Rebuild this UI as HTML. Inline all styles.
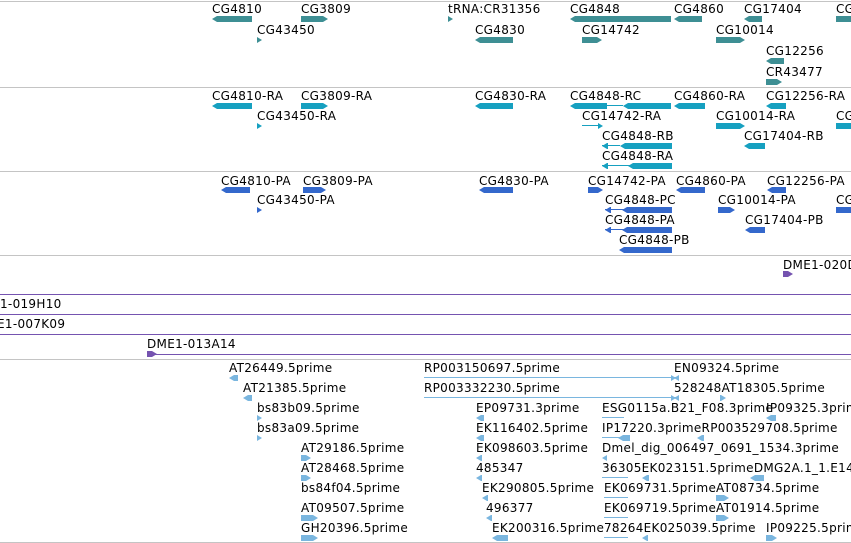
<!DOCTYPE html>
<html><head><meta charset="utf-8"><style>
body{margin:0;width:851px;height:543px;overflow:hidden;background:#fff;position:relative;font-family:"DejaVu Sans","Liberation Sans",sans-serif}
.t{position:absolute;font-size:12px;line-height:12px;letter-spacing:0.3px;color:#000;white-space:nowrap;margin-top:1px}
.b{position:absolute;height:6px}
.L{clip-path:polygon(0 50%,5px 0,100% 0,100% 100%,5px 100%)}
.R{clip-path:polygon(0 0,calc(100% - 5px) 0,100% 50%,calc(100% - 5px) 100%,0 100%)}
.g{background:#3e8f94}.c{background:#16a0c0}.p{background:#3468cc}.e{background:#7ab6df}.v{background:#7553b0}
.h{position:absolute;left:0;width:851px;height:1px;background:#c4c4c4}
.pl{position:absolute;height:1px;background:#7553b0}
.ln{position:absolute;height:1px}
</style></head><body>
<div class="h" style="top:1px"></div>
<div class="h" style="top:87px"></div>
<div class="h" style="top:171px"></div>
<div class="h" style="top:255px"></div>
<div class="h" style="top:359px"></div>
<div class="h" style="top:542px"></div>

<div class="t" style="left:212px;top:2px">CG4810</div><div class="b g L" style="left:212px;top:16px;width:40px"></div>
<div class="t" style="left:301px;top:2px">CG3809</div><div class="b g R" style="left:301px;top:16px;width:27px"></div>
<div class="t" style="left:257px;top:23px">CG43450</div><div class="b g R" style="left:257px;top:37px;width:5px"></div>
<div class="t" style="left:448px;top:2px">tRNA:CR31356</div><div class="b g R" style="left:448px;top:16px;width:5px"></div>
<div class="t" style="left:475px;top:23px">CG4830</div><div class="b g L" style="left:475px;top:37px;width:38px"></div>
<div class="t" style="left:570px;top:2px">CG4848</div><div class="b g L" style="left:570px;top:16px;width:101px"></div>
<div class="t" style="left:674px;top:2px">CG4860</div><div class="b g L" style="left:674px;top:16px;width:28px"></div>
<div class="t" style="left:744px;top:2px">CG17404</div><div class="b g L" style="left:744px;top:16px;width:18px"></div>
<div class="t" style="left:836px;top:2px">CG</div><div class="b g" style="left:836px;top:16px;width:15px"></div>
<div class="t" style="left:582px;top:23px">CG14742</div><div class="b g R" style="left:582px;top:37px;width:20px"></div>
<div class="t" style="left:716px;top:23px">CG10014</div><div class="b g R" style="left:716px;top:37px;width:29px"></div>
<div class="t" style="left:766px;top:44px">CG12256</div><div class="b g L" style="left:766px;top:58px;width:18px"></div>
<div class="t" style="left:766px;top:65px">CR43477</div><div class="b g R" style="left:766px;top:79px;width:16px"></div>

<div class="t" style="left:212px;top:89px">CG4810-RA</div><div class="b c L" style="left:212px;top:103px;width:40px"></div>
<div class="t" style="left:301px;top:89px">CG3809-RA</div><div class="b c R" style="left:301px;top:103px;width:27px"></div>
<div class="t" style="left:257px;top:109px">CG43450-RA</div><div class="b c R" style="left:257px;top:123px;width:5px"></div>
<div class="t" style="left:475px;top:89px">CG4830-RA</div><div class="b c L" style="left:475px;top:103px;width:38px"></div>
<div class="t" style="left:570px;top:89px">CG4848-RC</div><div class="b c L" style="left:570px;top:103px;width:37px"></div><div class="ln c" style="left:607px;top:105px;width:16px"></div><div class="b c L" style="left:623px;top:103px;width:48px"></div>
<div class="t" style="left:674px;top:89px">CG4860-RA</div><div class="b c L" style="left:674px;top:103px;width:31px"></div>
<div class="t" style="left:766px;top:89px">CG12256-RA</div><div class="b c L" style="left:766px;top:103px;width:20px"></div>
<div class="t" style="left:582px;top:109px">CG14742-RA</div><div class="ln c" style="left:582px;top:125px;width:18px"></div><div class="b c R" style="left:598px;top:123px;width:5px"></div>
<div class="t" style="left:716px;top:109px">CG10014-RA</div><div class="b c R" style="left:716px;top:123px;width:29px"></div>
<div class="t" style="left:836px;top:109px">CG</div><div class="b c" style="left:836px;top:123px;width:15px"></div>
<div class="t" style="left:602px;top:129px">CG4848-RB</div><div class="ln c" style="left:602px;top:145px;width:18px"></div><div class="b c L" style="left:602px;top:143px;width:6px"></div><div class="b c L" style="left:620px;top:143px;width:52px"></div>
<div class="t" style="left:744px;top:129px">CG17404-RB</div><div class="b c L" style="left:744px;top:143px;width:21px"></div>
<div class="t" style="left:602px;top:149px">CG4848-RA</div><div class="ln c" style="left:602px;top:165px;width:28px"></div><div class="b c L" style="left:602px;top:163px;width:6px"></div><div class="b c L" style="left:628px;top:163px;width:44px"></div>

<div class="t" style="left:221px;top:174px">CG4810-PA</div><div class="b p L" style="left:221px;top:187px;width:29px"></div>
<div class="t" style="left:303px;top:174px">CG3809-PA</div><div class="b p R" style="left:303px;top:187px;width:23px"></div>
<div class="t" style="left:257px;top:193px">CG43450-PA</div><div class="b p R" style="left:257px;top:207px;width:5px"></div>
<div class="t" style="left:479px;top:174px">CG4830-PA</div><div class="b p L" style="left:479px;top:187px;width:34px"></div>
<div class="t" style="left:588px;top:174px">CG14742-PA</div><div class="b p R" style="left:588px;top:187px;width:15px"></div>
<div class="t" style="left:676px;top:174px">CG4860-PA</div><div class="b p L" style="left:676px;top:187px;width:29px"></div>
<div class="t" style="left:767px;top:174px">CG12256-PA</div><div class="b p L" style="left:767px;top:187px;width:19px"></div>
<div class="t" style="left:605px;top:193px">CG4848-PC</div><div class="ln p" style="left:605px;top:209px;width:20px"></div><div class="b p L" style="left:605px;top:207px;width:6px"></div><div class="b p L" style="left:622px;top:207px;width:50px"></div>
<div class="t" style="left:718px;top:193px">CG10014-PA</div><div class="b p R" style="left:718px;top:207px;width:17px"></div>
<div class="t" style="left:836px;top:193px">CG</div><div class="b p" style="left:836px;top:207px;width:15px"></div>
<div class="t" style="left:605px;top:213px">CG4848-PA</div><div class="ln p" style="left:605px;top:229px;width:20px"></div><div class="b p L" style="left:605px;top:227px;width:6px"></div><div class="b p L" style="left:622px;top:227px;width:50px"></div>
<div class="t" style="left:745px;top:213px">CG17404-PB</div><div class="b p L" style="left:745px;top:227px;width:20px"></div>
<div class="t" style="left:619px;top:233px">CG4848-PB</div><div class="b p L" style="left:619px;top:247px;width:53px"></div>

<div class="t" style="left:783px;top:258px">DME1-020D</div><div class="b v R" style="left:783px;top:271px;width:10px"></div>
<div class="pl" style="left:0;top:294px;width:851px"></div>
<div class="t" style="left:0;top:297px">1-019H10</div>
<div class="pl" style="left:0;top:314px;width:851px"></div>
<div class="t" style="left:-3px;top:317px">E1-007K09</div>
<div class="pl" style="left:0;top:334px;width:851px"></div>
<div class="t" style="left:147px;top:337px">DME1-013A14</div><div class="b v R" style="left:147px;top:351px;width:10px"></div><div class="pl" style="left:150px;top:354px;width:701px"></div>

<div class="t" style="left:229px;top:361px">AT26449.5prime</div><div class="b e L" style="left:229px;top:375px;width:9px"></div>
<div class="t" style="left:243px;top:381px">AT21385.5prime</div><div class="b e L" style="left:243px;top:395px;width:9px"></div>
<div class="t" style="left:257px;top:401px">bs83b09.5prime</div><div class="b e R" style="left:257px;top:415px;width:5px"></div>
<div class="t" style="left:257px;top:421px">bs83a09.5prime</div><div class="b e R" style="left:257px;top:435px;width:5px"></div>
<div class="t" style="left:301px;top:441px">AT29186.5prime</div><div class="b e R" style="left:301px;top:455px;width:10px"></div>
<div class="t" style="left:301px;top:461px">AT28468.5prime</div><div class="b e R" style="left:301px;top:475px;width:10px"></div>
<div class="t" style="left:301px;top:481px">bs84f04.5prime</div>
<div class="t" style="left:301px;top:501px">AT09507.5prime</div><div class="b e R" style="left:301px;top:515px;width:17px"></div>
<div class="t" style="left:301px;top:521px">GH20396.5prime</div><div class="b e R" style="left:301px;top:535px;width:17px"></div>

<div class="t" style="left:424px;top:361px">RP003150697.5prime</div><div class="ln e" style="left:424px;top:377px;width:252px"></div><div class="b e R" style="left:671px;top:375px;width:5px"></div>
<div class="t" style="left:424px;top:381px">RP003332230.5prime</div><div class="ln e" style="left:424px;top:397px;width:252px"></div><div class="b e R" style="left:671px;top:395px;width:5px"></div>
<div class="t" style="left:476px;top:401px">EP09731.3prime</div><div class="b e L" style="left:476px;top:415px;width:8px"></div>
<div class="t" style="left:476px;top:421px">EK116402.5prime</div><div class="b e L" style="left:476px;top:435px;width:8px"></div>
<div class="t" style="left:476px;top:441px">EK098603.5prime</div><div class="b e L" style="left:476px;top:455px;width:6px"></div>
<div class="t" style="left:476px;top:461px">485347</div><div class="b e L" style="left:476px;top:475px;width:6px"></div>
<div class="t" style="left:482px;top:481px">EK290805.5prime</div><div class="b e L" style="left:482px;top:495px;width:6px"></div>
<div class="t" style="left:486px;top:501px">496377</div><div class="b e L" style="left:486px;top:515px;width:6px"></div>
<div class="t" style="left:492px;top:521px">EK200316.5prime</div><div class="b e L" style="left:492px;top:535px;width:16px"></div>

<div class="t" style="left:674px;top:361px">EN09324.5prime</div><div class="b e L" style="left:674px;top:375px;width:5px"></div>
<div class="t" style="left:674px;top:381px">528248AT18305.5prime</div><div class="b e L" style="left:674px;top:395px;width:5px"></div><div class="b e R" style="left:720px;top:395px;width:6px"></div>
<div class="t" style="left:602px;top:401px">ESG0115a.B21_F08.3prime</div><div class="ln e" style="left:602px;top:417px;width:22px"></div><div class="b e L" style="left:766px;top:415px;width:10px"></div>
<div class="t" style="left:766px;top:401px">IP09325.3prime</div>
<div class="t" style="left:602px;top:421px">IP17220.3primeRP003529708.5prime</div><div class="ln e" style="left:602px;top:437px;width:22px"></div><div class="b e L" style="left:618px;top:435px;width:12px"></div><div class="b e L" style="left:697px;top:435px;width:7px"></div>
<div class="t" style="left:602px;top:441px">Dmel_dig_006497_0691_1534.3prime</div><div class="b e L" style="left:602px;top:455px;width:5px"></div>
<div class="t" style="left:602px;top:461px">36305EK023151.5primeDMG2A.1_1.E14.</div><div class="ln e" style="left:602px;top:477px;width:26px"></div><div class="b e L" style="left:642px;top:475px;width:7px"></div><div class="b e L" style="left:750px;top:475px;width:14px"></div>
<div class="t" style="left:604px;top:481px">EK069731.5prime</div><div class="ln e" style="left:604px;top:497px;width:24px"></div><div class="t" style="left:716px;top:481px">AT08734.5prime</div><div class="b e R" style="left:716px;top:495px;width:13px"></div>
<div class="t" style="left:604px;top:501px">EK069719.5prime</div><div class="ln e" style="left:604px;top:517px;width:24px"></div><div class="t" style="left:716px;top:501px">AT01914.5prime</div><div class="b e R" style="left:716px;top:515px;width:13px"></div>
<div class="t" style="left:604px;top:521px">78264EK025039.5prime</div><div class="ln e" style="left:604px;top:537px;width:24px"></div><div class="b e L" style="left:642px;top:535px;width:6px"></div><div class="t" style="left:766px;top:521px">IP09225.5prime</div><div class="b e R" style="left:766px;top:535px;width:11px"></div>
</body></html>
